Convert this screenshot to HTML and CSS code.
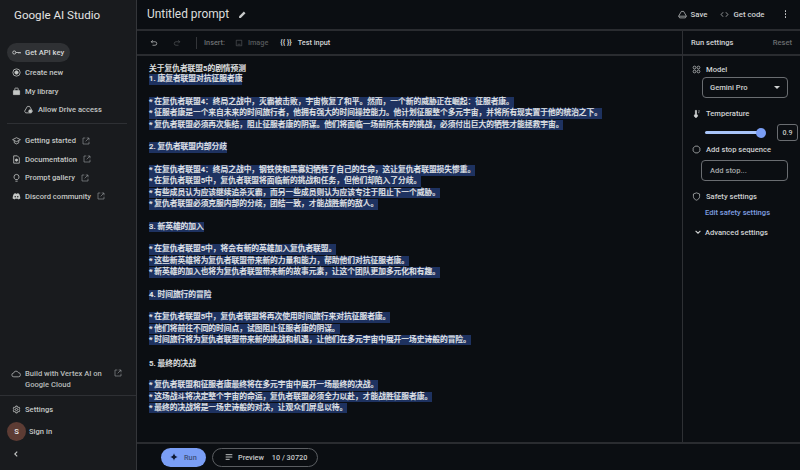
FILE: index.html
```html
<!DOCTYPE html>
<html lang="zh">
<head>
    <meta charset="UTF-8">
    <meta name="viewport" content="width=device-width, initial-scale=1.0">
    <title>Google AI Studio</title>
    <link rel="stylesheet" href="styles.css">
</head>
<body>
    <div class="app">
        <aside class="sidebar">
            <div class="brand">Google AI Studio</div>

            <nav class="nav-main">
                <a class="nav-item api-key">
                    <svg class="icon" viewBox="0 0 16 16"><circle cx="4" cy="8" r="2.8"/><path d="M6.800 8H15.500M12 8v1.800M14.500 8v1.800"/></svg>
                    Get API key
                </a>
                <a class="nav-item">
                    <svg class="icon" viewBox="0 0 16 16"><circle cx="8" cy="8" r="6.500"/><circle class="solid" cx="8" cy="8" r="3"/></svg>
                    Create new
                </a>
                <a class="nav-item">
                    <svg class="icon" viewBox="0 0 16 16"><path class="solid" d="M2.500 6.500h11v7h-11z"/><path d="M5 6.500V3a1 1 0 0 1 1-1h4a1 1 0 0 1 1 1v3.500"/></svg>
                    My library
                </a>
                <a class="nav-item nav-sub">
                    <svg class="icon" viewBox="0 0 16 16"><path d="M6 2.500h4l5 8.500-2 3H3l-2-3z"/><circle class="solid" cx="11" cy="11" r="2.500"/></svg>
                    Allow Drive access
                </a>
            </nav>

            <nav class="nav-links">
                <a class="nav-item">
                    <svg class="icon" viewBox="0 0 16 16"><path d="M8 3 1 6.500 8 10l7-3.500zM4 8.500V12l4 2 4-2V8.500"/></svg>
                    Getting started
                    <svg class="ext" viewBox="0 0 12 12"><path d="M5 1.500H1.500v9h9V7M7 1.500h3.500V5M10.500 1.500l-5 5"/></svg>
                </a>
                <a class="nav-item">
                    <svg class="icon" viewBox="0 0 16 16"><path d="M3 1.500h6.500L13 5v9.500H3z"/><circle class="solid" cx="8" cy="9" r="2"/></svg>
                    Documentation
                    <svg class="ext" viewBox="0 0 12 12"><path d="M5 1.500H1.500v9h9V7M7 1.500h3.500V5M10.500 1.500l-5 5"/></svg>
                </a>
                <a class="nav-item">
                    <svg class="icon" viewBox="0 0 16 16"><path d="M6 11.500C4.500 10.500 3.500 9 3.500 7a4.500 4.500 0 0 1 9 0c0 2-1 3.500-2.500 4.500zM6 14.500h4"/></svg>
                    Prompt gallery
                    <svg class="ext" viewBox="0 0 12 12"><path d="M5 1.500H1.500v9h9V7M7 1.500h3.500V5M10.500 1.500l-5 5"/></svg>
                </a>
                <a class="nav-item">
                    <svg class="icon discord" viewBox="0 0 16 16"><path d="M3.500 3.200C5 2.500 6 2.300 6.500 2.300l.4.8h2.200l.4-.8c.5 0 1.500.2 3 .9 1.500 2.300 2.400 5.300 2.300 8.500-1.200.9-2.300 1.400-3.300 1.600l-.8-1.300-.1-.2c-1.600.5-3.600.5-5.200 0l-.9 1.500c-1-.2-2.100-.7-3.300-1.600C1.100 8.500 2 5.500 3.500 3.200z"/><circle class="cut" cx="5.700" cy="8.500" r="1.300"/><circle class="cut" cx="10.300" cy="8.500" r="1.300"/></svg>
                    Discord community
                    <svg class="ext" viewBox="0 0 12 12"><path d="M5 1.500H1.500v9h9V7M7 1.500h3.500V5M10.500 1.500l-5 5"/></svg>
                </a>
            </nav>

            <div class="vertex">
                <svg class="icon" viewBox="0 0 16 16"><path d="M4.500 12.500a3 3 0 0 1-.3-6 4 4 0 0 1 7.600-.6 3.300 3.300 0 0 1 0 6.600z"/></svg>
                <span class="vertex-text">Build with Vertex AI on Google Cloud</span>
                <svg class="ext" viewBox="0 0 12 12"><path d="M5 1.500H1.500v9h9V7M7 1.500h3.500V5M10.500 1.500l-5 5"/></svg>
            </div>

            <div class="side-bottom">
                <a class="nav-item">
                    <svg class="icon" viewBox="0 0 16 16"><path d="M6.800 1.800h2.400l.4 1.900 1.300.7 1.800-.6 1.200 2.100-1.400 1.300v1.600l1.400 1.300-1.200 2.100-1.800-.6-1.300.7-.4 1.900H6.800l-.4-1.900-1.300-.7-1.800.6-1.200-2.100 1.400-1.300V7.200L2.100 5.900l1.200-2.100 1.800.6 1.300-.7z"/><circle cx="8" cy="8" r="2"/></svg>
                    Settings
                </a>
                <div class="signin">
                    <span class="avatar">S</span>
                    Sign in
                </div>
                <svg class="collapse" viewBox="0 0 10 10"><path d="M6.500 2 3.500 5l3 3"/></svg>
            </div>
        </aside>

        <main class="main">
            <header class="topbar">
                <div class="title">Untitled prompt</div>
                <svg class="pencil" viewBox="0 0 12 12"><path d="M1.500 10.500V8.300L7.800 2l2.200 2.200-6.300 6.300z"/></svg>
                <div class="top-actions">
                    <a class="top-btn">
                        <svg class="icon" viewBox="0 0 16 16"><path d="M6 2.500h4l5 8.500-2 3H3l-2-3z"/><path d="M1.500 11h13"/></svg>
                        Save
                    </a>
                    <a class="top-btn">
                        <svg class="icon" viewBox="0 0 16 16"><path d="M5.500 4 2 8l3.500 4M10.500 4 14 8l-3.500 4"/></svg>
                        Get code
                    </a>
                    <span class="more"><i></i><i></i><i></i></span>
                </div>
            </header>

            <div class="workspace">
                <section class="editor">
                    <div class="toolbar">
                        <svg class="tool" viewBox="0 0 16 16"><path d="M5.500 2.500 2.500 5.500l3 3M2.500 5.500H10a3.500 3.500 0 0 1 0 7H5"/></svg>
                        <svg class="tool off" viewBox="0 0 16 16"><path d="M10.500 2.500l3 3-3 3M13.500 5.500H6a3.500 3.500 0 0 0 0 7h5"/></svg>
                        <span class="tool-sep"></span>
                        <span class="insert">Insert:</span>
                        <span class="tool-btn off">
                            <svg class="tool" viewBox="0 0 16 16"><path d="M2.500 2.500h11v11h-11zM5 10.500h6"/></svg>
                            Image
                        </span>
                        <span class="tool-btn"><span class="braces">{{ }}</span> Test input</span>
                    </div>

                    <div class="prompt">
                        <p>关于复仇者联盟5的剧情预测</p>
                        <p><mark>1. 康复者联盟对抗征服者康</mark></p>
                        <p>&nbsp;</p>
                        <p><mark>* 在复仇者联盟4：终局之战中，灭霸被击败，宇宙恢复了和平。然而，一个新的威胁正在崛起：征服者康。</mark></p>
                        <p><mark>* 征服者康是一个来自未来的时间旅行者，他拥有强大的时间操控能力。他计划征服整个多元宇宙，并将所有现实置于他的统治之下。</mark></p>
                        <p><mark>* 复仇者联盟必须再次集结，阻止征服者康的阴谋。他们将面临一场前所未有的挑战，必须付出巨大的牺牲才能拯救宇宙。</mark></p>
                        <p>&nbsp;</p>
                        <p><mark>2. 复仇者联盟内部分歧</mark></p>
                        <p>&nbsp;</p>
                        <p><mark>* 在复仇者联盟4：终局之战中，钢铁侠和黑寡妇牺牲了自己的生命，这让复仇者联盟损失惨重。</mark></p>
                        <p><mark>* 在复仇者联盟5中，复仇者联盟将面临新的挑战和任务，但他们却陷入了分歧。</mark></p>
                        <p><mark>* 有些成员认为应该继续追杀灭霸，而另一些成员则认为应该专注于阻止下一个威胁。</mark></p>
                        <p><mark>* 复仇者联盟必须克服内部的分歧，团结一致，才能战胜新的敌人。</mark></p>
                        <p>&nbsp;</p>
                        <p><mark>3. 新英雄的加入</mark></p>
                        <p>&nbsp;</p>
                        <p><mark>* 在复仇者联盟5中，将会有新的英雄加入复仇者联盟。</mark></p>
                        <p><mark>* 这些新英雄将为复仇者联盟带来新的力量和能力，帮助他们对抗征服者康。</mark></p>
                        <p><mark>* 新英雄的加入也将为复仇者联盟带来新的故事元素，让这个团队更加多元化和有趣。</mark></p>
                        <p>&nbsp;</p>
                        <p><mark>4. 时间旅行的冒险</mark></p>
                        <p>&nbsp;</p>
                        <p><mark>* 在复仇者联盟5中，复仇者联盟将再次使用时间旅行来对抗征服者康。</mark></p>
                        <p><mark>* 他们将前往不同的时间点，试图阻止征服者康的阴谋。</mark></p>
                        <p><mark>* 时间旅行将为复仇者联盟带来新的挑战和机遇，让他们在多元宇宙中展开一场史诗般的冒险。</mark></p>
                        <p>&nbsp;</p>
                        <p>5. 最终的决战</p>
                        <p>&nbsp;</p>
                        <p><mark>* 复仇者联盟和征服者康最终将在多元宇宙中展开一场最终的决战。</mark></p>
                        <p><mark>* 这场战斗将决定整个宇宙的命运，复仇者联盟必须全力以赴，才能战胜征服者康。</mark></p>
                        <p><mark>* 最终的决战将是一场史诗般的对决，让观众们屏息以待。</mark></p>
                    </div>
                </section>

                <aside class="settings">
                    <div class="settings-head">
                        <span>Run settings</span>
                        <span class="reset">Reset</span>
                    </div>
                    <div class="settings-body">
                        <div class="field-label">
                            <svg class="icon" viewBox="0 0 16 16"><circle cx="4.500" cy="4.500" r="2.500"/><circle cx="11.500" cy="4.500" r="2.500"/><circle cx="4.500" cy="11.500" r="2.500"/><circle cx="11.500" cy="11.500" r="2.500"/></svg>
                            Model
                        </div>
                        <div class="select">Gemini Pro <span class="caret"></span></div>

                        <div class="field-label temp">
                            <svg class="icon" viewBox="0 0 16 16"><path class="solid" d="M6 2.500v7a2.800 2.800 0 1 0 2 0v-7z"/><path d="M11 3.500h3M11 6.500h2"/></svg>
                            Temperature
                        </div>
                        <div class="slider-row">
                            <div class="slider"><span class="thumb"></span></div>
                            <span class="slider-value">0.9</span>
                        </div>

                        <div class="field-label stop">
                            <svg class="icon" viewBox="0 0 16 16"><path d="M5.500 2h5L14 5.500v5L10.500 14h-5L2 10.500v-5z"/></svg>
                            Add stop sequence
                        </div>
                        <div class="stop-input">Add stop...</div>

                        <div class="field-label safety">
                            <svg class="icon" viewBox="0 0 16 16"><path d="M8 1.500 2.500 3.500V8c0 3 2.300 5.500 5.500 6.500 3.200-1 5.500-3.500 5.500-6.500V3.500z"/></svg>
                            Safety settings
                        </div>
                        <a class="edit-safety">Edit safety settings</a>

                        <div class="field-label advanced">
                            <svg class="chev" viewBox="0 0 10 10"><path d="M2 3.500 5 6.500l3-3"/></svg>
                            Advanced settings
                        </div>
                    </div>
                </aside>
            </div>

            <div class="runbar">
                <button class="run">
                    <svg class="spark" viewBox="0 0 12 12"><path d="M6 .5C6.500 3.500 8.500 5.500 11.500 6 8.500 6.500 6.500 8.500 6 11.500 5.500 8.500 3.500 6.500.5 6 3.500 5.500 5.500 3.500 6 .5z"/></svg>
                    Run
                </button>
                <div class="preview">
                    <svg class="lines" viewBox="0 0 12 12"><path d="M1 2.500h10M1 6h10M1 9.500h6"/></svg>
                    <span class="preview-label">Preview</span>
                    <span class="count">10 / 30720</span>
                </div>
            </div>
        </main>
    </div>
</body>
</html>
```

FILE: styles.css
```css
* {
    box-sizing: border-box;
}
html, body {
    margin: 0;
    height: 100%;
}
body {
    font-family: Roboto, "Noto Sans CJK SC", sans-serif;
    font-size: 7.6px;
    font-weight: 500;
    background-color: #0b0e12;
    color: #c4c7c5;
    overflow: hidden;
}
svg {
    fill: none;
    stroke: currentColor;
    stroke-width: 1.4;
    flex: none;
}
svg .solid {
    fill: currentColor;
}
.app {
    display: grid;
    grid-template-columns: 137px 1fr;
    height: 470px;
}

/* sidebar */
.sidebar {
    display: flex;
    flex-direction: column;
    background: #191b1e;
    border-right: 1px solid #34363a;
    min-height: 0;
}
.brand {
    font-size: 11.6px;
    font-weight: 400;
    color: #e3e3e3;
    padding: 8px 0 0 14px;
    height: 43px;
}
.nav-main {
    display: flex;
    flex-direction: column;
    gap: 3.9px;
    margin: 0 9px 0 7px;
    padding-bottom: 6px;
    border-bottom: 1px solid #2e3034;
}
.nav-item {
    display: flex;
    align-items: center;
    gap: 4px;
    height: 14.5px;
    padding-left: 4px;
    white-space: nowrap;
}
.nav-item .icon {
    width: 9px;
    height: 9px;
    margin-left: 1px;
}
.api-key {
    background: #2f3134;
    border-radius: 10px;
    height: 18.5px;
    width: 63px;
    gap: 3px;
    color: #d4d6d6;
}
.api-key .icon {
    width: 11px;
    margin-left: 0;
}
.nav-sub {
    padding-left: 16px;
    gap: 5px;
}
.nav-links {
    display: flex;
    flex-direction: column;
    gap: 3.9px;
    padding: 10px 7px 0;
}
.nav-links .ext {
    margin-left: 2px;
}
.ext {
    width: 8px;
    height: 8px;
    stroke-width: 1;
    color: #8e9194;
}
.discord {
    fill: currentColor;
    stroke: none;
}
.discord .cut {
    fill: #191b1e;
}
.vertex {
    margin-top: auto;
    display: flex;
    align-items: flex-start;
    gap: 4px;
    padding: 0 14px 5px 11px;
    line-height: 10.5px;
    color: #b8bbbb;
}
.vertex .icon {
    width: 10px;
    height: 10px;
    stroke-width: 1.2;
}
.vertex .ext {
    margin-left: auto;
}
.vertex-text {
    width: 80px;
}
.side-bottom {
    border-top: 1px solid #2e3034;
    padding: 6.5px 7px 0;
    height: 75px;
}
.signin {
    display: flex;
    align-items: center;
    gap: 3px;
    margin-top: 5px;
}
.avatar {
    width: 19px;
    height: 19px;
    border-radius: 50%;
    background: #5d3c34;
    color: #eee;
    display: flex;
    align-items: center;
    justify-content: center;
}
.collapse {
    display: block;
    width: 8px;
    height: 8px;
    margin: 9px 0 0 5px;
}

/* top bar */
.main {
    display: flex;
    flex-direction: column;
    min-width: 0;
    min-height: 0;
}
.topbar {
    display: flex;
    align-items: center;
    height: 31px;
    padding: 0 14px 1px 10px;
    border-bottom: 2px solid #2a2c30;
}
.title {
    font-size: 11.9px;
    font-weight: 400;
    color: #dcdedd;
}
.pencil {
    width: 9px;
    height: 9px;
    margin-left: 9px;
    fill: #c9cbcb;
    stroke: none;
}
.top-actions {
    margin-left: auto;
    display: flex;
    align-items: center;
    gap: 13px;
}
.top-btn {
    display: flex;
    align-items: center;
    gap: 4px;
    font-size: 7.8px;
    color: #d0d2d2;
}
.top-btn .icon {
    width: 9px;
    height: 9px;
    stroke-width: 1.2;
}
.more {
    display: flex;
    flex-direction: column;
    gap: 1.5px;
    margin-left: 7px;
}
.more i {
    width: 1.5px;
    height: 1.5px;
    background: #d0d2d2;
    border-radius: 50%;
}

/* editor */
.workspace {
    flex: 1;
    display: flex;
    min-height: 0;
}
.editor {
    flex: 1;
    display: flex;
    flex-direction: column;
    min-width: 0;
}
.toolbar {
    display: flex;
    align-items: center;
    height: 25px;
    padding-left: 13px;
    border-bottom: 2px solid #2a2c30;
    font-size: 7.3px;
    color: #d4d6d6;
}
.tool {
    width: 8px;
    height: 8px;
    margin-right: 15px;
    stroke-width: 1.3;
}
.tool.off {
    color: #55585b;
}
.tool-sep {
    width: 1px;
    height: 12px;
    background: #333539;
    margin-right: 7px;
}
.insert {
    color: #6d7073;
    margin-right: 10px;
}
.tool-btn {
    display: flex;
    align-items: center;
    margin-right: 12px;
}
.tool-btn.off {
    color: #55585b;
}
.tool-btn .tool {
    margin-right: 5px;
}
.braces {
    margin-right: 6px;
    font-weight: 700;
}
.prompt {
    flex: 1;
    padding: 7px 12px 0;
    font-size: 7.72px;
    color: #e3e5e5;
    -webkit-text-stroke: 0.15px;
    overflow: hidden;
}
.prompt p {
    margin: 0;
    height: 11.33px;
    line-height: 11.33px;
    white-space: nowrap;
}
mark {
    display: inline-block;
    height: 10.6px;
    line-height: 10.6px;
    vertical-align: top;
    background: #1e3260;
    color: #e6e8e9;
}

/* run bar */
.runbar {
    height: 28px;
    flex: none;
    display: flex;
    align-items: center;
    gap: 6px;
    padding-left: 24px;
    border-top: 2px solid #2a2c30;
    font-size: 7.3px;
}
.run {
    display: flex;
    align-items: center;
    gap: 6px;
    width: 45px;
    height: 19px;
    padding: 0 0 0 9px;
    border: none;
    border-radius: 10px;
    background: #7a9ef5;
    color: #3e4f78;
    font: inherit;
}
.spark {
    width: 8px;
    height: 8px;
    fill: #0f1a33;
    stroke: none;
}
.preview {
    display: flex;
    align-items: center;
    width: 106px;
    height: 19px;
    padding-left: 12px;
    border: 1px solid #5b5e62;
    border-radius: 10px;
    color: #c8caca;
}
.lines {
    width: 8px;
    height: 8px;
    margin-right: 5px;
}
.preview-label {
    margin-right: 8px;
}

/* run settings */
.settings {
    width: 118px;
    border-left: 1px solid #2e3034;
    display: flex;
    flex-direction: column;
}
.settings-head {
    display: flex;
    justify-content: space-between;
    align-items: center;
    height: 25px;
    padding: 0 8px;
    border-bottom: 2px solid #2a2c30;
    color: #d0d2d2;
}
.reset {
    color: #696c6f;
}
.settings-body {
    padding: 8px 8px 0 8px;
}
.field-label {
    display: flex;
    align-items: center;
    gap: 5px;
    height: 11px;
    color: #d0d2d2;
}
.field-label .icon {
    width: 9px;
    height: 9px;
    margin-left: 1px;
    stroke-width: 1.2;
}
.select {
    display: flex;
    align-items: center;
    justify-content: space-between;
    width: 86px;
    height: 21px;
    margin: 2px 0 0 11px;
    padding: 0 7px;
    border: 1px solid #6a6d71;
    border-radius: 4px;
    color: #d0d2d2;
}
.caret {
    width: 0;
    height: 0;
    border-left: 3px solid transparent;
    border-right: 3px solid transparent;
    border-top: 3px solid #d0d2d2;
}
.temp {
    margin-top: 9.5px;
}
.slider-row {
    display: flex;
    align-items: center;
    justify-content: space-between;
    margin-top: 5.5px;
    padding-left: 14px;
}
.slider {
    position: relative;
    width: 56px;
    height: 3px;
    border-radius: 2px;
    background: #a8c4f8;
}
.thumb {
    position: absolute;
    right: -5px;
    top: -3.5px;
    width: 10px;
    height: 10px;
    border-radius: 50%;
    background: #7a9ef5;
}
.slider-value {
    width: 21px;
    height: 17px;
    border: 1px solid #6a6d71;
    border-radius: 3px;
    display: flex;
    align-items: center;
    justify-content: center;
    font-size: 7px;
    margin-right: -6px;
}
.stop {
    margin-top: 2.5px;
}
.stop-input {
    display: flex;
    align-items: center;
    width: 87px;
    height: 21px;
    margin: 5.5px 0 0 10px;
    padding-left: 8px;
    border: 1px solid #6a6d71;
    border-radius: 4px;
    color: #a5a8a9;
}
.safety {
    margin-top: 9.5px;
}
.edit-safety {
    display: block;
    margin: 6px 0 0 14px;
    color: #7f9ee0;
}
.advanced {
    margin-top: 10px;
    padding-left: 3px;
    gap: 3px;
}
.chev {
    width: 8px;
    height: 8px;
}
```
